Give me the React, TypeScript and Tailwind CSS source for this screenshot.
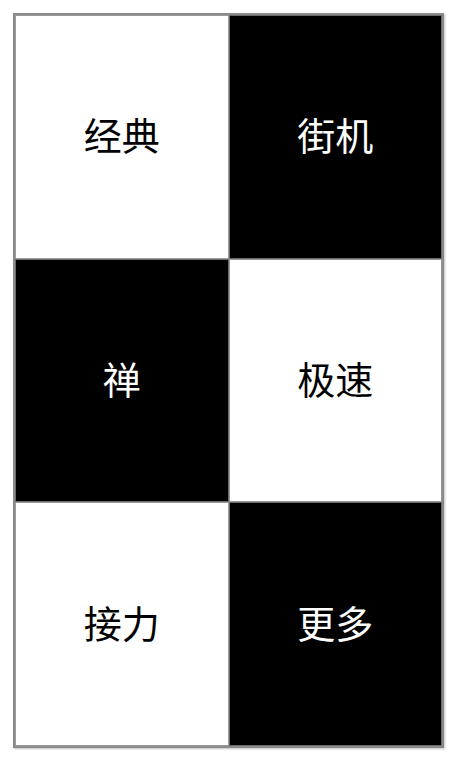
export default function App() {
  const modes = [
    { name: '经典', dark: false },
    { name: '街机', dark: true },
    { name: '禅', dark: true },
    { name: '极速', dark: false },
    { name: '接力', dark: false },
    { name: '更多', dark: true },
  ]

  return (
    <main className="w-[456px] h-[760px] bg-white p-[13px] pr-[12px]">
      <div className="h-[735px] border-2 border-[#8a8a8a] shadow-[1px_1px_2px_rgba(0,0,0,0.25)] grid grid-cols-2 grid-rows-3">
        {modes.map((m) => (
          <div
            key={m.name}
            className={
              m.dark
                ? 'flex items-center justify-center pb-[6px] bg-black text-white border border-[#6b6b6b]'
                : 'flex items-center justify-center pb-[6px] bg-white text-black border border-[#9a9a9a]'
            }
          >
            <span className="text-[38px] font-normal font-['Noto_Sans_CJK_SC',sans-serif]">
              {m.name}
            </span>
          </div>
        ))}
      </div>
    </main>
  )
}
